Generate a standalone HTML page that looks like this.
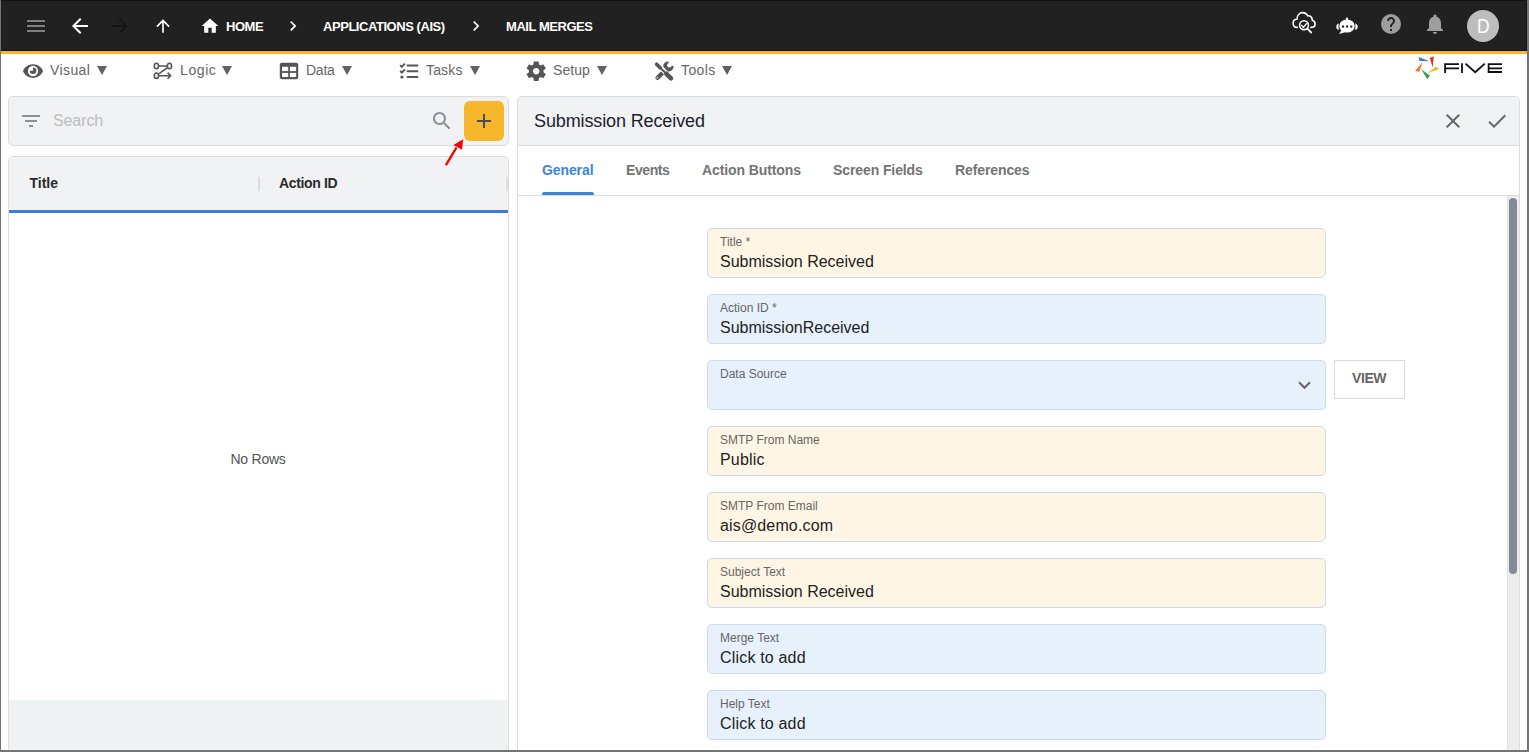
<!DOCTYPE html>
<html><head><meta charset="utf-8">
<style>
*{box-sizing:border-box;margin:0;padding:0}
html,body{width:1529px;height:752px;overflow:hidden;background:#fff;font-family:"Liberation Sans",sans-serif}
.abs{position:absolute}
#frame{position:absolute;left:0;top:0;width:1529px;height:752px;border-left:1px solid #747474;border-right:2px solid #747474;border-bottom:2px solid #747474;pointer-events:none;z-index:50}
#hdr{position:absolute;left:0;top:0;width:1529px;height:51px;background:#212121;border-bottom:1px solid #111}
#ybar{position:absolute;left:0;top:51px;width:1529px;height:3px;background:#f7b62b}
.bc{position:absolute;top:19px;color:#fff;font-weight:bold;font-size:13px;line-height:16px;white-space:nowrap;letter-spacing:-0.45px}
.menu{position:absolute;top:62px;font-size:14px;color:#666;line-height:16px;white-space:nowrap}
.card{position:absolute;background:#f1f2f4;border:1px solid #dcdcdc;border-radius:5px}
.fld{position:absolute;left:707px;width:619px;height:50px;border:1px solid #c9daee;border-radius:5px}
.cream{background:#fff5e4}
.blue{background:#e7f1fc}
.lbl{position:absolute;left:12px;top:6px;font-size:12px;color:#666;line-height:14px;white-space:nowrap}
.val{position:absolute;left:12px;top:23px;font-size:16px;color:#222;line-height:19px;white-space:nowrap}
.tab{position:absolute;top:162px;font-size:14px;font-weight:bold;color:#747474;letter-spacing:-0.1px;line-height:16px;white-space:nowrap}
</style></head><body>
<div id="hdr"></div>
<div id="ybar"></div>
<div class="abs" style="left:0;top:0;width:1529px;height:1px;background:#121212"></div>
<div class="abs" style="left:1526px;top:0;width:1px;height:51px;background:#161616"></div>

<!-- header icons -->
<svg class="abs" style="left:27px;top:20px" width="18" height="12"><rect x="0" y="0" width="18" height="2" fill="#808080"/><rect x="0" y="5" width="18" height="2" fill="#808080"/><rect x="0" y="10" width="18" height="2" fill="#808080"/></svg>
<svg class="abs" style="left:68px;top:14px" width="24" height="24" viewBox="0 0 24 24"><path d="M20 11H7.83l5.59-5.59L12 4l-8 8 8 8 1.41-1.41L7.83 13H20v-2z" fill="#fff"/></svg>
<svg class="abs" style="left:108px;top:14px" width="24" height="24" viewBox="0 0 24 24"><path d="M12 4l-1.41 1.41L16.17 11H4v2h12.17l-5.58 5.59L12 20l8-8z" fill="#151515"/></svg>
<svg class="abs" style="left:153px;top:16px" width="20" height="20" viewBox="0 0 24 24"><path d="M4 12l1.41 1.41L11 7.83V20h2V7.83l5.58 5.59L20 12l-8-8-8 8z" fill="#fff"/></svg>
<svg class="abs" style="left:200px;top:16px" width="20" height="20" viewBox="0 0 24 24"><path d="M10 20v-6h4v6h5v-8h3L12 3 2 12h3v8z" fill="#fff"/></svg>
<div class="bc" style="left:226px">HOME</div>
<svg class="abs" style="left:282.8px;top:16px" width="20" height="20" viewBox="0 0 24 24"><path d="M10 6L8.59 7.41 13.17 12l-4.58 4.59L10 18l6-6z" fill="#fff"/></svg>
<div class="bc" style="left:323px">APPLICATIONS (AIS)</div>
<svg class="abs" style="left:465.8px;top:16px" width="20" height="20" viewBox="0 0 24 24"><path d="M10 6L8.59 7.41 13.17 12l-4.58 4.59L10 18l6-6z" fill="#fff"/></svg>
<div class="bc" style="left:506px">MAIL MERGES</div>

<!-- right header icons -->
<!-- cloud search -->
<svg class="abs" style="left:1288px;top:8px" width="32" height="30" viewBox="1288 8 32 30" fill="none" stroke="#fff" stroke-width="1.6" stroke-linecap="round">
<path d="M1297.4 27.4C1294.6 27.4 1293.1 25.4 1293.1 23.2C1293.1 21 1294.8 19.4 1296.9 19.3C1297.1 15.2 1299.6 12.6 1302.6 12.6C1305 12.6 1306.8 14 1307.6 15.8C1310.4 15.4 1312.4 17.6 1312.3 20.2C1314.1 20.8 1315.1 22.3 1315.1 23.9C1315.1 25.9 1313.5 27.4 1310.8 27.4"/>
<circle cx="1304" cy="25.2" r="4.4" fill="#212121"/>
<path d="M1307.4 28.6L1311.2 32.5" stroke-width="1.8"/>
<path d="M1301.7 25.6L1303.4 27.2L1306.6 23.6" stroke-width="1.4"/>
</svg>
<!-- bot -->
<svg class="abs" style="left:1332px;top:10px" width="30" height="28" viewBox="1332 10 30 28">
<rect x="1345.9" y="17.6" width="2.2" height="3.5" rx="1.1" fill="#fff"/>
<ellipse cx="1347" cy="26" rx="7.7" ry="6.6" fill="#fff"/>
<path d="M1341.2 30.5L1339.1 33.9L1345 32.3Z" fill="#fff"/>
<path d="M1338.6 23.3C1337 24 1336.3 25.3 1336.3 26.8C1336.3 28.3 1337 29.6 1338.6 30.2Z" fill="#fff"/>
<path d="M1355.4 23.3C1357 24 1357.7 25.3 1357.7 26.8C1357.7 28.3 1357 29.6 1355.4 30.2Z" fill="#fff"/>
<rect x="1342" y="25.5" width="2.1" height="2.1" fill="#212121"/><rect x="1346.1" y="25.5" width="2.1" height="2.1" fill="#212121"/><rect x="1350.2" y="25.5" width="2.1" height="2.1" fill="#212121"/>
</svg>
<!-- help -->
<svg class="abs" style="left:1379px;top:12px" width="24" height="24" viewBox="0 0 24 24"><circle cx="12" cy="12" r="10" fill="#9e9e9e"/><path d="M13 19h-2v-2h2v2zm2.07-7.75l-.9.92C13.45 12.9 13 13.5 13 15h-2v-.5c0-1.1.45-2.1 1.17-2.83l1.24-1.26c.37-.36.59-.86.59-1.41 0-1.1-.9-2-2-2s-2 .9-2 2H8c0-2.21 1.79-4 4-4s4 1.79 4 4c0 .88-.36 1.68-.93 2.25z" fill="#212121"/></svg>
<!-- bell -->
<svg class="abs" style="left:1423px;top:12px" width="24" height="24" viewBox="0 0 24 24"><path d="M12 22c1.1 0 2-.9 2-2h-4c0 1.1.89 2 2 2zm6-6v-5c0-3.07-1.64-5.64-4.5-6.32V4c0-.83-.67-1.5-1.5-1.5s-1.5.67-1.5 1.5v.68C7.63 5.36 6 7.92 6 11v5l-2 2v1h16v-1l-2-2z" fill="#9e9e9e"/></svg>
<!-- avatar -->
<div class="abs" style="left:1467px;top:10px;width:32px;height:32px;border-radius:50%;background:#bdbdbd;color:#fff;font-size:20px;line-height:32px;text-align:center"><span style="display:inline-block;transform:scaleX(0.87)">D</span></div>


<!-- menu bar -->
<!-- eye -->
<svg class="abs" style="left:22px;top:60px" width="22" height="22" viewBox="0 0 24 24"><path d="M12 4.5C7 4.5 2.73 7.61 1 12c1.73 4.39 6 7.5 11 7.5s9.27-3.11 11-7.5c-1.73-4.39-6-7.5-11-7.5z" fill="#555"/><circle cx="12" cy="12" r="5.6" fill="#fff"/><path d="M12.1 11.8V8.2A3.6 3.6 0 1 1 8.5 11.8Z" fill="#555"/></svg>
<div class="menu" style="left:50px;letter-spacing:0.4px">Visual</div><svg class="abs" style="left:97px;top:66px" width="10" height="10"><path d="M0 0H10L5 9Z" fill="#616161"/></svg>
<!-- logic -->
<svg class="abs" style="left:148px;top:58px" width="30" height="26" viewBox="148 58 30 26" fill="none" stroke="#555" stroke-width="1.6">
<ellipse cx="156.4" cy="66" rx="2.1" ry="2.7"/><ellipse cx="169.5" cy="66" rx="2.1" ry="2.7"/><ellipse cx="156.4" cy="75.7" rx="2.1" ry="2.7"/>
<path d="M158.5 66H167.4M167.4 67.6L158.8 73.8M158.5 75.7H170.4M167.6 72.6L170.6 75.7L167.6 78.8"/></svg>
<div class="menu" style="left:180px;letter-spacing:0.6px">Logic</div><svg class="abs" style="left:222px;top:66px" width="10" height="10"><path d="M0 0H10L5 9Z" fill="#616161"/></svg>
<!-- data -->
<svg class="abs" style="left:279px;top:62px" width="20" height="18" viewBox="0 0 20 18"><rect x="0.8" y="0.8" width="18.4" height="16.4" rx="2" fill="#555"/><rect x="3" y="4.8" width="6.2" height="4.3" fill="#fff"/><rect x="10.9" y="4.8" width="6.2" height="4.3" fill="#fff"/><rect x="3" y="10.9" width="6.2" height="4.1" fill="#fff"/><rect x="10.9" y="10.9" width="6.2" height="4.1" fill="#fff"/></svg>
<div class="menu" style="left:306px;letter-spacing:-0.25px">Data</div><svg class="abs" style="left:342px;top:66px" width="10" height="10"><path d="M0 0H10L5 9Z" fill="#616161"/></svg>
<!-- tasks -->
<svg class="abs" style="left:395px;top:58px" width="30" height="26" viewBox="395 58 30 26" fill="none" stroke="#555" stroke-width="1.9">
<path d="M400.2 65.2L401.8 66.8L404.9 63.6M400.2 71L401.8 72.6L404.9 69.4"/><circle cx="401.9" cy="77" r="1.6" fill="#555" stroke="none"/>
<path d="M406.8 65.5H418.2M406.8 71.2H418.2M406.8 77H418.2" stroke-width="2"/></svg>
<div class="menu" style="left:426px;letter-spacing:0.15px">Tasks</div><svg class="abs" style="left:470px;top:66px" width="10" height="10"><path d="M0 0H10L5 9Z" fill="#616161"/></svg>
<!-- setup -->
<svg class="abs" style="left:523.7px;top:58.9px" width="24.4" height="24.4" viewBox="0 0 24 24"><path d="M19.14 12.94c.04-.3.06-.61.06-.94 0-.32-.02-.64-.07-.94l2.03-1.58c.18-.14.23-.41.12-.61l-1.92-3.32c-.12-.22-.37-.29-.59-.22l-2.39.96c-.5-.38-1.03-.7-1.62-.94l-.36-2.54c-.04-.24-.24-.41-.48-.41h-3.84c-.24 0-.43.17-.47.41l-.36 2.54c-.59.24-1.13.57-1.62.94l-2.39-.96c-.22-.08-.47 0-.59.22L2.74 8.87c-.12.21-.08.47.12.61l2.03 1.58c-.05.3-.09.63-.09.94s.02.64.07.94l-2.03 1.58c-.18.14-.23.41-.12.61l1.92 3.32c.12.22.37.29.59.22l2.39-.96c.5.38 1.03.7 1.62.94l.36 2.54c.05.24.24.41.48.41h3.84c.24 0 .44-.17.47-.41l.36-2.54c.59-.24 1.13-.56 1.62-.94l2.39.96c.22.08.47 0 .59-.22l1.92-3.32c.12-.22.07-.47-.12-.61l-2.01-1.58zM12 15.2c-1.76 0-3.2-1.44-3.2-3.2s1.44-3.2 3.2-3.2 3.2 1.44 3.2 3.2-1.44 3.2-3.2 3.2z" fill="#555"/></svg>
<div class="menu" style="left:553px;letter-spacing:0.05px">Setup</div><svg class="abs" style="left:597px;top:66px" width="10" height="10"><path d="M0 0H10L5 9Z" fill="#616161"/></svg>
<!-- tools -->
<svg class="abs" style="left:648px;top:56px" width="32" height="30" viewBox="648 56 32 30">
<circle cx="668.4" cy="66.4" r="5.2" fill="#555"/>
<path d="M657.6 77.8L663.4 72" stroke="#555" stroke-width="4.4" stroke-linecap="round"/>
<circle cx="669.4" cy="65.2" r="2.3" fill="#fff"/>
<path d="M669.4 65.2L667.6 58.5L677 58.5L676.5 66.8Z" fill="#fff"/>
<rect x="656.6" y="76.8" width="1.7" height="1.7" fill="#c4c4c4"/>
<path d="M659 66L669 76" stroke="#fff" stroke-width="4.8"/>
<path d="M656.6 64.2L660.2 67.8" stroke="#555" stroke-width="3.6" stroke-linecap="round"/>
<path d="M659.5 67L666 73.5" stroke="#555" stroke-width="1.8"/>
<path d="M666.4 73.8L671 78.4" stroke="#555" stroke-width="4.6" stroke-linecap="round"/>
</svg>
<div class="menu" style="left:681px;letter-spacing:0.4px">Tools</div><svg class="abs" style="left:722px;top:66px" width="10" height="10"><path d="M0 0H10L5 9Z" fill="#616161"/></svg>


<!-- left panel -->
<div class="card" style="left:8px;top:96px;width:501px;height:50px"></div>
<svg class="abs" style="left:22px;top:115px" width="18" height="12"><rect x="0" y="0" width="18" height="2" fill="#8a9199"/><rect x="3" y="5" width="12" height="2" fill="#8a9199"/><rect x="7" y="10" width="4" height="2" fill="#8a9199"/></svg>
<div class="abs" style="left:53px;top:112px;font-size:16px;color:#bdbdbd;line-height:18px;letter-spacing:-0.1px">Search</div>
<svg class="abs" style="left:430px;top:108.5px" width="24" height="24" viewBox="0 0 24 24"><path d="M15.5 14h-.79l-.28-.27C15.41 12.59 16 11.11 16 9.5 16 5.91 13.09 3 9.5 3S3 5.91 3 9.5 5.91 16 9.5 16c1.61 0 3.09-.59 4.23-1.57l.27.28v.79l5 4.99L20.49 19l-4.99-5zm-6 0C7.01 14 5 11.99 5 9.5S7.01 5 9.5 5 14 7.01 14 9.5 11.99 14 9.5 14z" fill="#8a9199"/></svg>
<div class="abs" style="left:464px;top:101px;width:40px;height:40px;background:#f6b72d;border-radius:6px"></div>
<svg class="abs" style="left:477px;top:114px" width="14" height="14"><rect x="6" y="0" width="2" height="14" fill="#474c57"/><rect x="0" y="6" width="14" height="2" fill="#474c57"/></svg>


<div class="card" style="left:8px;top:156px;width:501px;height:620px;border-radius:5px 5px 0 0;background:#fff"></div>
<div class="abs" style="left:9px;top:157px;width:499px;height:53px;background:#f1f2f4;border-radius:4px 4px 0 0"></div>
<div class="abs" style="left:9px;top:210px;width:499px;height:3px;background:#3a7fd5"></div>
<div class="abs" style="left:29.5px;top:175px;font-size:14px;font-weight:bold;color:#2a2a2a;line-height:16px">Title</div>
<div class="abs" style="left:258px;top:177px;width:2px;height:14px;background:#dedede"></div>
<div class="abs" style="left:279px;top:175px;font-size:14px;font-weight:bold;color:#2a2a2a;line-height:16px;letter-spacing:-0.35px">Action ID</div>
<div class="abs" style="left:506px;top:177px;width:2px;height:14px;background:#dedede"></div>
<div class="abs" style="left:230.5px;top:451px;font-size:14px;color:#555;line-height:16px;letter-spacing:-0.25px">No Rows</div>
<div class="abs" style="left:9px;top:700px;width:499px;height:52px;background:#eef2f3"></div>

<!-- right panel -->
<div class="abs" style="left:517px;top:96px;width:1003px;height:680px;border:1px solid #dcdcdc;border-radius:5px 5px 0 0;background:#fff"></div>
<div class="abs" style="left:518px;top:97px;width:1001px;height:48px;background:#f1f2f4;border-radius:4px 4px 0 0"></div>
<div class="abs" style="left:518px;top:145px;width:1001px;height:1px;background:#dcdcdc"></div>
<div class="abs" style="left:518px;top:195px;width:1001px;height:1px;background:#dcdcdc"></div>
<div class="abs" style="left:534px;top:111px;font-size:18px;color:#1b2130;line-height:20px;white-space:nowrap;letter-spacing:-0.12px">Submission Received</div>

<div class="tab" style="left:542px;color:#3d85d8">General</div>
<div class="abs" style="left:542px;top:192px;width:52px;height:3px;background:#3d85d8;border-radius:2px 2px 0 0"></div>
<div class="tab" style="left:626px;letter-spacing:-0.4px">Events</div>
<div class="tab" style="left:702px">Action Buttons</div>
<div class="tab" style="left:833px">Screen Fields</div>
<div class="tab" style="left:955px">References</div>

<svg class="abs" style="left:1441px;top:109px" width="24" height="24" viewBox="0 0 24 24"><path d="M19 6.41L17.59 5 12 10.59 6.41 5 5 6.41 10.59 12 5 17.59 6.41 19 12 13.41 17.59 19 19 17.59 13.41 12z" fill="#666"/></svg>
<svg class="abs" style="left:1485px;top:109px" width="24" height="24" viewBox="0 0 24 24"><path d="M9 16.17L4.83 12l-1.42 1.41L9 19 21 7l-1.41-1.41z" fill="#666"/></svg>
<!-- scrollbar -->
<div class="abs" style="left:1507px;top:196px;width:12px;height:556px;background:#ececec;border-left:1px solid #e0e0e0"></div>
<div class="abs" style="left:1509px;top:198px;width:8px;height:376px;background:#828a99;border-radius:4px"></div>
<!-- VIEW -->
<div class="abs" style="left:1334px;top:360px;width:71px;height:39px;border:1px solid #d9d9d9;background:#fff"></div>
<div class="abs" style="left:1352px;top:370px;font-size:14px;font-weight:bold;color:#666;line-height:16px;letter-spacing:-0.4px">VIEW</div>

<!-- logo -->
<svg class="abs" style="left:1410px;top:54px" width="100" height="30" viewBox="1410 54 100 30">
<path d="M1418.7 57L1429.5 61.2L1419.4 61Z" fill="#3a7bd5"/>
<path d="M1433.8 56.2L1429.8 58.1L1432.7 67.5Z" fill="#e03030"/>
<path d="M1435.9 66.7L1439.2 69.3L1427.3 72.9Z" fill="#f5b52a"/>
<path d="M1421.2 69.3L1429.8 75.4L1427.3 79.3Z" fill="#3aa14a"/>
<path d="M1422.6 62.1L1415 71.1L1419.4 71.8Z" fill="#f57a2a"/>
<g fill="none" stroke="#111" stroke-width="1.8">
<path d="M1445.1 72.9V64.1H1459M1445.1 68.3H1459"/>
<path d="M1462 63.2V72.9"/>
<path d="M1465.5 63.6L1475.2 72.2L1484.8 63.6"/>
<path d="M1502 64.1H1488.6V72H1502M1488.6 68.3H1502"/>
</g></svg>
<div class="fld cream" style="top:228px"><div class="lbl">Title *</div><div class="val">Submission Received</div></div>
<div class="fld blue" style="top:294px"><div class="lbl">Action ID *</div><div class="val">SubmissionReceived</div></div>
<div class="fld blue" style="top:360px"><div class="lbl">Data Source</div><svg class="abs" style="left:590px;top:20px" width="13" height="9" viewBox="0 0 13 9"><path d="M1 1.2L6.5 6.8L12 1.2" stroke="#666" stroke-width="2" fill="none"/></svg></div>
<div class="fld cream" style="top:426px"><div class="lbl">SMTP From Name</div><div class="val" style="letter-spacing:0.2px">Public</div></div>
<div class="fld cream" style="top:492px"><div class="lbl">SMTP From Email</div><div class="val" style="letter-spacing:0.15px">ais@demo.com</div></div>
<div class="fld cream" style="top:558px"><div class="lbl">Subject Text</div><div class="val">Submission Received</div></div>
<div class="fld blue" style="top:624px"><div class="lbl">Merge Text</div><div class="val" style="letter-spacing:0.18px">Click to add</div></div>
<div class="fld blue" style="top:690px"><div class="lbl">Help Text</div><div class="val" style="letter-spacing:0.18px">Click to add</div></div>

<svg class="abs" style="left:440px;top:136px" width="30" height="34" viewBox="440 136 30 34"><path d="M445.9 165.2L456.5 147.5" stroke="#f00" stroke-width="2.4" fill="none"/><path d="M463.2 139.3L453.4 145L462 149.8Z" fill="#f00"/></svg>
<div id="frame"></div>
</body></html>
